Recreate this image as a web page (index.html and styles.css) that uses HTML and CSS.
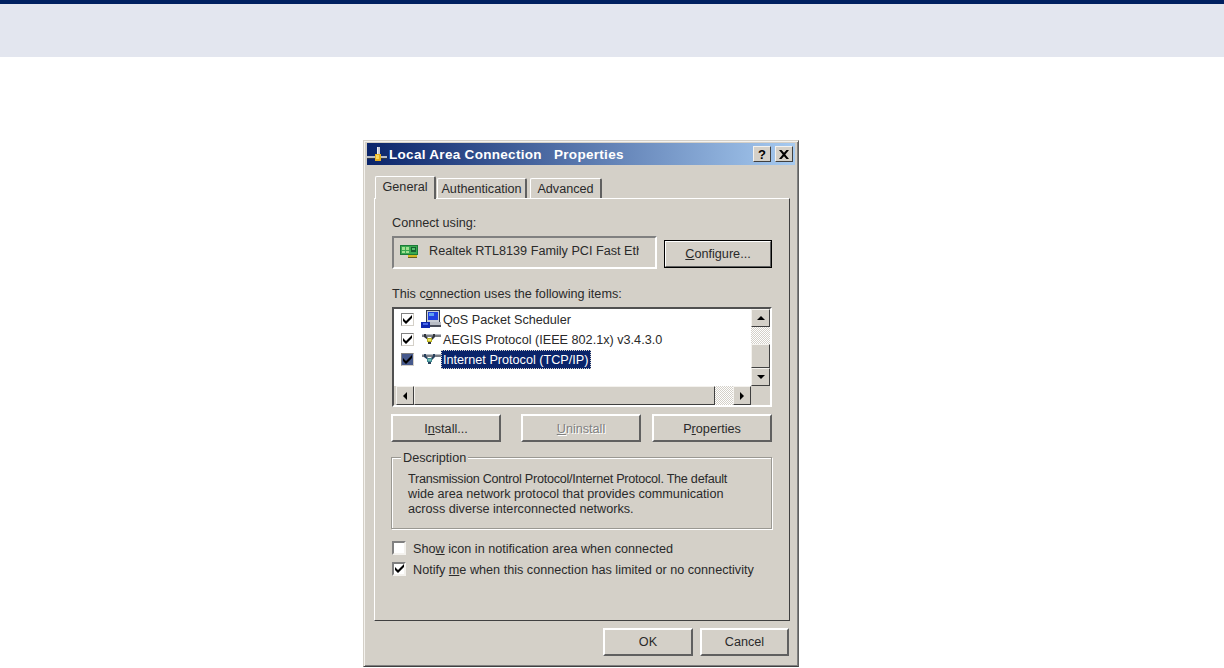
FILE: index.html
```html
<!DOCTYPE html>
<html lang="en">
<head>
    <meta charset="UTF-8">
    <meta name="viewport" content="width=device-width, initial-scale=1.0">
    <title>Local Area Connection Properties</title>
    <link rel="stylesheet" href="styles.css">
</head>
<body>

<!-- Page header band -->
<div class="page-band"></div>

<div class="window">
    <!-- Title bar -->
    <div class="titlebar">
        <svg class="title-icon" width="20" height="20" viewBox="0 0 20 20">
            <path d="M10 3h3v10h-3z" fill="#c8ccd8"/>
            <path d="M10 3h1v10h-1z" fill="#f0f0f0"/>
            <path d="M0 12h20v3H0z" fill="#b8bcc4"/>
            <path d="M0 14h20v1H0z" fill="#303848"/>
            <path d="M8 10h6v7H8z" fill="#e8b020"/>
            <path d="M9 11h3v4H9z" fill="#f8d860"/>
        </svg>
        <span class="title-text">Local Area Connection&nbsp;&nbsp; Properties</span>
        <div class="title-btns">
            <span class="title-btn help">?</span>
            <span class="title-btn">
                <svg width="10" height="9" viewBox="0 0 10 9"><path d="M0 0h2.500L5 2.800 7.500 0H10L6.300 4.500 10 9H7.500L5 6.200 2.500 9H0l3.700-4.500z" fill="#000"/></svg>
            </span>
        </div>
    </div>

    <!-- Tabs -->
    <div class="tabs">
        <div class="tab active">General</div>
        <div class="tab tab-auth">Authentication</div>
        <div class="tab tab-adv">Advanced</div>
    </div>

    <div class="panel">
        <div class="label">Connect using:</div>
        <div class="adapter-row">
            <div class="adapter-box">
                <svg width="18" height="15" viewBox="0 0 18 15">
                    <path d="M0 1h18v10H0z" fill="#1c7c38"/>
                    <path d="M1 2h16v8H1z" fill="#38a850"/>
                    <path d="M2 3h3v3H2zM6 3h3v3H6zM2 7h3v2H2zM6 7h3v2H6z" fill="#a0e090"/>
                    <path d="M11 3h5v5h-5z" fill="#146030"/>
                    <path d="M12 4h3v2h-3z" fill="#58c070"/>
                    <path d="M8 11h9v2H8z" fill="#d0b820"/>
                    <path d="M8 13h9v1H8z" fill="#686020"/>
                </svg>
                <span class="adapter-name">Realtek RTL8139 Family PCI Fast Eth</span>
            </div>
            <button class="btn btn-default"><u>C</u>onfigure...</button>
        </div>

        <div class="label items-label">This c<u>o</u>nnection uses the following items:</div>

        <div class="listbox">
            <div class="list-main">
                <div class="list-items">
                    <div class="list-row">
                        <span class="check small"><svg width="9" height="9" viewBox="0 0 9 9"><path d="M0 3l3 3 6-6v3L3 9 0 6z"/></svg></span>
                        <svg class="row-icon" width="20" height="20" viewBox="0 0 20 20">
                            <path d="M5 1h14v13H5z" fill="#c8ccd4"/>
                            <path d="M5 1h14v1H5zM5 1h1v13H5zM18 1h1v13h-1z" fill="#303848"/>
                            <path d="M7 3h10v8H7z" fill="#2040e0"/>
                            <path d="M8 4h5v3H8z" fill="#60a0f0"/>
                            <path d="M4 13h16v4H4z" fill="#b8bcc4"/>
                            <path d="M4 16h16v2H4z" fill="#484c58"/>
                            <path d="M0 13h9v6H0z" fill="#1028b0"/>
                            <path d="M2 14h5v2H2z" fill="#4868e8"/>
                        </svg>
                        <span class="row-text">QoS Packet Scheduler</span>
                    </div>
                    <div class="list-row">
                        <span class="check small"><svg width="9" height="9" viewBox="0 0 9 9"><path d="M0 3l3 3 6-6v3L3 9 0 6z"/></svg></span>
                        <svg class="row-icon" width="20" height="20" viewBox="0 0 20 20">
                            <path d="M1 5h19v3H1z" fill="#787c84"/>
                            <path d="M1 5h19v1H1z" fill="#b8bcc4"/>
                            <path d="M3 5h2v2l2 2h3l2-2V5h2v3l-3 3H7L3 8z" fill="#30343c"/>
                            <path d="M6 9h5v4H6z" fill="#b8b020"/>
                            <path d="M7 10h3v2H7z" fill="#f0e858"/>
                            <path d="M7 13h3v2H7z" fill="#30343c"/>
                        </svg>
                        <span class="row-text">AEGIS Protocol (IEEE 802.1x) v3.4.3.0</span>
                    </div>
                    <div class="list-row">
                        <span class="check small selected"><svg width="9" height="9" viewBox="0 0 9 9"><path d="M0 3l3 3 6-6v3L3 9 0 6z"/></svg></span>
                        <svg class="row-icon" width="20" height="20" viewBox="0 0 20 20">
                            <path d="M1 5h19v3H1z" fill="#787c84"/>
                            <path d="M1 5h19v1H1z" fill="#b8bcc4"/>
                            <path d="M3 5h2v2l2 2h3l2-2V5h2v3l-3 3H7L3 8z" fill="#28405c"/>
                            <path d="M6 9h5v4H6z" fill="#408890"/>
                            <path d="M7 10h3v2H7z" fill="#70c0b8"/>
                            <path d="M7 13h3v2H7z" fill="#28405c"/>
                        </svg>
                        <span class="row-text selected-text">Internet Protocol (TCP/IP)</span>
                    </div>
                </div>
                <div class="vscroll">
                    <span class="sb-btn"><i class="arrow up"></i></span>
                    <span class="sb-track track-top"></span>
                    <span class="sb-thumb-v"></span>
                    <span class="sb-btn"><i class="arrow down"></i></span>
                </div>
            </div>
            <div class="hscroll">
                <span class="sb-btn"><i class="arrow left"></i></span>
                <span class="sb-thumb-h"></span>
                <span class="sb-track track-right"></span>
                <span class="sb-btn"><i class="arrow right"></i></span>
            </div>
        </div>

        <div class="action-row">
            <button class="btn btn-install">I<u>n</u>stall...</button>
            <button class="btn btn-uninstall disabled"><u>U</u>ninstall</button>
            <button class="btn btn-props">P<u>r</u>operties</button>
        </div>

        <fieldset class="desc">
            <legend>Description</legend>
            <span class="desc-tight">Transmission Control Protocol/Internet Protocol. The default</span><br>
            wide area network protocol that provides communication<br>
            across diverse interconnected networks.
        </fieldset>

        <div class="opt-row first">
            <span class="check"></span>
            <span class="opt-text">Sho<u>w</u> icon in notification area when connected</span>
        </div>
        <div class="opt-row">
            <span class="check"><svg width="9" height="9" viewBox="0 0 9 9"><path d="M0 3l3 3 6-6v3L3 9 0 6z"/></svg></span>
            <span class="opt-text">Notify <u>m</u>e when this connection has limited or no connectivity</span>
        </div>
    </div>

    <div class="bottom-row">
        <button class="btn btn-ok">OK</button>
        <button class="btn btn-cancel">Cancel</button>
    </div>
</div>

</body>
</html>
```

FILE: styles.css
```css
* {
    box-sizing: border-box;
}
body {
    margin: 0;
    height: 668px;
    overflow: hidden;
    background-color: #ffffff;
    font-family: "Liberation Sans", Arial, sans-serif;
    font-size: 12.65px;
    line-height: 15px;
    color: #2a2a2a;
}
u {
    text-underline-offset: 1px;
}
.page-band {
    height: 57px;
    background-color: #e3e6ef;
    border-top: 4px solid #002060;
}
.window {
    width: 436px;
    height: 527px;
    margin: 83px 0 0 363px;
    padding: 2px 3px 3px;
    background-color: #d4d0c8;
    border: 1px solid #d4d0c8;
    border-right-color: #606060;
    border-bottom-color: #404040;
    box-shadow: inset 1px 1px 0 #f4f2ee, inset -1px -1px 0 #808080;
    display: flex;
    flex-direction: column;
}
.titlebar {
    height: 22px;
    display: flex;
    align-items: center;
    padding: 0 2px 0 0;
    background: linear-gradient(to right, #0a246a, #a6caf0);
    color: #fff;
    font-weight: bold;
    font-size: 13.5px;
    letter-spacing: 0.3px;
}
.title-icon {
    margin-right: 2px;
}
.title-text {
    flex: 1;
}
.title-btns {
    display: flex;
    gap: 4px;
}
.title-btn {
    width: 18px;
    height: 16px;
    display: flex;
    align-items: center;
    justify-content: center;
    background-color: #d4d0c8;
    color: #000;
    font-size: 13px;
    letter-spacing: 0;
    border: 1px solid;
    border-color: #f4f2ee #404040 #404040 #f4f2ee;
}
.tabs {
    display: flex;
    align-items: flex-end;
    height: 23px;
    margin: 10px 0 0 8px;
    position: relative;
    z-index: 1;
}
.tab {
    height: 20px;
    padding-top: 3px;
    text-align: center;
    border: 1px solid #fff;
    border-bottom: 0;
    border-right: 2px solid #606060;
    border-radius: 2px 2px 0 0;
    background-color: #d4d0c8;
}
.tab.active {
    width: 61px;
    height: 23px;
    margin-bottom: -1px;
}
.tab-auth {
    width: 90px;
    margin-left: 1px;
}
.tab-adv {
    width: 72px;
    margin-left: 3px;
}
.panel {
    width: 416px;
    height: 423px;
    margin-left: 7px;
    padding: 17px 16px 0;
    border: 1px solid;
    border-color: #fff #404040 #404040 #fff;
}
.label {
    padding-left: 1px;
}
.adapter-row {
    display: flex;
    align-items: flex-end;
    justify-content: space-between;
    margin: 5px 1px 0 1px;
}
.adapter-box {
    width: 265px;
    height: 33px;
    display: flex;
    align-items: center;
    padding: 0 0 3px 6px;
    border: 2px solid;
    border-color: #808080 #fff #fff #808080;
}
.adapter-name {
    width: 210px;
    margin-left: 11px;
    overflow: hidden;
    white-space: nowrap;
}
.btn {
    height: 28px;
    padding: 0;
    background-color: #d4d0c8;
    color: #2a2a2a;
    font: inherit;
    border: 2px solid;
    border-color: #fff #606060 #606060 #fff;
}
.btn-default {
    width: 108px;
    margin-bottom: 1px;
    outline: 1px solid #000;
    outline-offset: -1px;
}
.btn.disabled {
    color: #808080;
    text-shadow: 1px 1px 0 #fff;
}
.items-label {
    margin-top: 18px;
}
.listbox {
    width: 380px;
    height: 100px;
    margin: 5px 0 0 1px;
    border: 2px solid;
    border-color: #505050 #fff #fff #505050;
}
.list-main {
    display: flex;
    height: 77px;
}
.list-items {
    flex: 1;
    background-color: #fff;
}
.list-row {
    height: 20px;
    display: flex;
    align-items: center;
    padding-left: 7px;
}
.row-icon {
    margin-left: 7px;
}
.row-text {
    margin: 2px 0 0 2px;
}
.selected-text {
    margin: 0;
    padding: 3px 3px 1px 2px;
    background-color: #0a246a;
    color: #fff;
    outline: 1px dotted #d4d0c8;
    outline-offset: -1px;
}
.check {
    width: 14px;
    height: 14px;
    margin-bottom: 2px;
    display: inline-flex;
    align-items: center;
    justify-content: center;
    flex-shrink: 0;
    background-color: #fff;
    border: 2px solid;
    border-color: #808080 #f4f2ee #f4f2ee #808080;
}
.check.small {
    width: 13px;
    height: 13px;
    margin-bottom: 0;
    border-width: 1px;
    border-color: #808080 #d4d0c8 #d4d0c8 #808080;
}
.check.selected {
    background-color: #46598c;
}
.check svg {
    fill: #000;
}
.vscroll {
    width: 19px;
    display: flex;
    flex-direction: column;
}
.hscroll {
    width: 357px;
    height: 19px;
    padding-left: 2px;
    display: flex;
}
.sb-btn {
    flex: 0 0 18px;
    display: flex;
    align-items: center;
    justify-content: center;
    background-color: #d4d0c8;
    border: 1px solid;
    border-color: #f4f2ee #404040 #404040 #f4f2ee;
}
.sb-track {
    background-color: #ece9e4;
    background-image: repeating-conic-gradient(#d4d0c8 0 25%, #fff 0 50%);
    background-size: 2px 2px;
}
.track-top {
    flex: 0 0 17px;
}
.sb-thumb-v {
    flex: 0 0 24px;
    background-color: #d4d0c8;
    border: 1px solid;
    border-color: #f4f2ee #404040 #404040 #f4f2ee;
}
.sb-thumb-h {
    flex: 1;
    background-color: #d4d0c8;
    border: 1px solid;
    border-color: #f4f2ee #404040 #404040 #f4f2ee;
}
.track-right {
    flex: 0 0 18px;
}
.arrow {
    width: 0;
    height: 0;
    border: 4px solid transparent;
}
.arrow.up {
    border-top: 0;
    border-bottom-color: #000;
}
.arrow.down {
    border-bottom: 0;
    border-top-color: #000;
}
.arrow.left {
    border-left: 0;
    border-right-color: #000;
}
.arrow.right {
    border-right: 0;
    border-left-color: #000;
}
.action-row {
    display: flex;
    margin-top: 7px;
}
.action-row .btn {
    padding-top: 2px;
}
.btn-install {
    width: 110px;
}
.btn-uninstall {
    width: 120px;
    margin-left: 20px;
}
.btn-props {
    width: 120px;
    margin-left: 11px;
}
.desc {
    width: 381px;
    height: 80px;
    margin: 7px 0 0;
    padding: 6px 16px 0;
    border: 1px solid #9a9892;
    box-shadow: 1px 1px 0 #fff, inset 1px 1px 0 #fff;
}
.desc legend {
    padding: 2px 2px 0;
    margin-left: -7px;
    background-color: #d4d0c8;
}
.desc-tight {
    letter-spacing: -0.27px;
}
.opt-row {
    display: flex;
    align-items: center;
    gap: 7px;
    height: 21px;
    padding-left: 1px;
}
.opt-row.first {
    margin-top: 9px;
}
.opt-text {
    margin-top: 2px;
}
.bottom-row {
    display: flex;
    justify-content: flex-end;
    gap: 7px;
    margin: 7px 6px 0 0;
}
.btn-ok {
    width: 90px;
}
.btn-cancel {
    width: 89px;
}
```
